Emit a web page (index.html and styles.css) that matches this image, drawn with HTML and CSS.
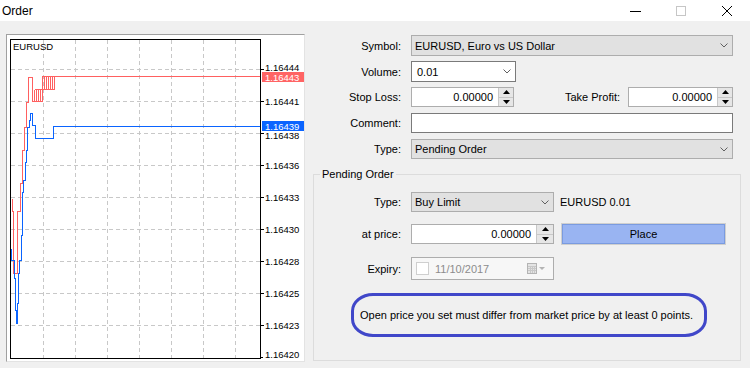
FILE: index.html
```html
<!DOCTYPE html>
<html>
<head>
<meta charset="utf-8">
<link rel="stylesheet" href="styles.css">
</head>
<body>
<div class="titlebar">
  <span class="title">Order</span>
  <div class="winbtns">
    <div class="winbtn"><svg width="12" height="12" viewBox="0 0 12 12"><path d="M1 6.5 H12" stroke="#000" stroke-width="1"/></svg></div>
    <div class="winbtn"><svg width="12" height="12" viewBox="0 0 12 12"><rect x="1.5" y="1.5" width="9" height="9" fill="none" stroke="#c6c6c6"/></svg></div>
    <div class="winbtn"><svg width="12" height="12" viewBox="0 0 12 12"><path d="M1 1 L11 11 M11 1 L1 11" stroke="#000" stroke-width="1"/></svg></div>
  </div>
</div>
<div class="main">
  <div class="chartpanel">
    <svg width="297" height="326" viewBox="7 35 297 326" shape-rendering="crispEdges">
      <rect x="7" y="35" width="297" height="326" fill="#fff"/>
      <g stroke="#c8c8c8" stroke-dasharray="4 3" stroke-width="1">
        <path d="M11 69.5 H260 M11 101.5 H260 M11 133.5 H260 M11 165.5 H260 M11 197.5 H260 M11 229.5 H260 M11 261.5 H260 M11 293.5 H260 M11 325.5 H260"/>
        <path d="M43.5 40 V359 M75.5 40 V359 M107.5 40 V359 M139.5 40 V359 M171.5 40 V359 M203.5 40 V359 M235.5 40 V359"/>
      </g>
      <rect x="10.5" y="39.5" width="250" height="319" fill="none" stroke="#000"/>
      <g stroke="#000">
        <path d="M260 69.5 H264 M260 101.5 H264 M260 133.5 H264 M260 165.5 H264 M260 197.5 H264 M260 229.5 H264 M260 261.5 H264 M260 293.5 H264 M260 325.5 H264 M260 357.5 H263"/>
      </g>
      <g fill="none" stroke="#ff6060">
        <path d="M12.5 198.5 V211.5 H13.5 V273.5 H17.5 V211.5 H20.5 V183.5 H22.5 V150.5 H24.5 V127.5 H26.5 V102.5 H28.5 V77.5 H32.5 V101.5 H42.5 V76.5 H260"/>
        <path d="M34.5 89.5 H42.5 M34.5 89.5 V101.5 M36.5 89.5 V101.5 M38.5 89.5 V101.5 M40.5 89.5 V101.5"/>
        <path d="M42.5 89.5 H54.5 M44.5 76.5 V89.5 M46.5 76.5 V89.5 M48.5 76.5 V89.5 M50.5 76.5 V89.5 M52.5 76.5 V89.5 M54.5 76.5 V89.5"/>
      </g>
      <path fill="none" stroke="#0a64ff" d="M11.5 248.5 V260.5 H14.5 V278.5 H15.5 V310.5 H16.5 V323.5 H17.5 V303.5 H18.5 V273.5 H19.5 V260.5 H21.5 V235.5 H22.5 V192.5 H23.5 V180.5 H25.5 V162.5 H26.5 V150.5 H27.5 V127.5 H29.5 V120.5 H30.5 V113.5 H32.5 V125.5 H35.5 V138.5 H53.5 V126.5 H260"/>
      <g font-family="Liberation Sans, Arial, sans-serif" font-size="9.5" fill="#000" shape-rendering="auto">
        <text x="13" y="50">EURUSD</text>
        <text x="265" y="71">1.16444</text>
        <text x="265" y="105">1.16441</text>
        <text x="265" y="139">1.16438</text>
        <text x="265" y="169">1.16436</text>
        <text x="265" y="201">1.16433</text>
        <text x="265" y="233">1.16430</text>
        <text x="265" y="265">1.16428</text>
        <text x="265" y="297">1.16425</text>
        <text x="265" y="329">1.16423</text>
        <text x="265" y="358">1.16420</text>
      </g>
      <rect x="262" y="72" width="42" height="10" fill="#ff6464"/>
      <rect x="262" y="121" width="42" height="10" fill="#0a64ff"/>
      <g font-family="Liberation Sans, Arial, sans-serif" font-size="9.5" fill="#fff">
        <text x="265" y="80.5">1.16443</text>
        <text x="265" y="129.5">1.16439</text>
      </g>
    </svg>
  </div>
  <div class="form">
    <div class="row r-symbol">
      <span class="lbl">Symbol:</span>
      <div class="combo w-full"><span>EURUSD, Euro vs US Dollar</span><svg class="chev" width="8" height="5" viewBox="0 0 8 5"><path d="M0.5 0.5 L4 4 L7.5 0.5" stroke="#606060" fill="none"/></svg></div>
    </div>
    <div class="row r-volume">
      <span class="lbl">Volume:</span>
      <div class="combo edit w-vol"><span>0.01</span><svg class="chev" width="8" height="5" viewBox="0 0 8 5"><path d="M0.5 0.5 L4 4 L7.5 0.5" stroke="#606060" fill="none"/></svg></div>
    </div>
    <div class="row r-sl">
      <span class="lbl">Stop Loss:</span>
      <div class="spin w-sl">
        <span class="inp">0.00000</span>
        <span class="btns"><span class="b up"><svg width="7" height="4" viewBox="0 0 7 4"><path d="M3.5 0 L7 4 L0 4Z"/></svg></span><span class="b dn"><svg width="7" height="4" viewBox="0 0 7 4"><path d="M0 0 L7 0 L3.5 4Z"/></svg></span></span>
      </div>
      <span class="lbl2">Take Profit:</span>
      <div class="spin w-tp">
        <span class="inp">0.00000</span>
        <span class="btns"><span class="b up"><svg width="7" height="4" viewBox="0 0 7 4"><path d="M3.5 0 L7 4 L0 4Z"/></svg></span><span class="b dn"><svg width="7" height="4" viewBox="0 0 7 4"><path d="M0 0 L7 0 L3.5 4Z"/></svg></span></span>
      </div>
    </div>
    <div class="row r-comment">
      <span class="lbl">Comment:</span>
      <div class="textbox w-full"></div>
    </div>
    <div class="row r-type">
      <span class="lbl">Type:</span>
      <div class="combo w-full"><span>Pending Order</span><svg class="chev" width="8" height="5" viewBox="0 0 8 5"><path d="M0.5 0.5 L4 4 L7.5 0.5" stroke="#606060" fill="none"/></svg></div>
    </div>
    <fieldset class="group">
      <legend>Pending Order</legend>
      <div class="row g-type">
        <span class="lbl glbl">Type:</span>
        <div class="combo w-pend"><span>Buy Limit</span><svg class="chev" width="8" height="5" viewBox="0 0 8 5"><path d="M0.5 0.5 L4 4 L7.5 0.5" stroke="#606060" fill="none"/></svg></div>
        <span class="info">EURUSD 0.01</span>
      </div>
      <div class="row g-price">
        <span class="lbl glbl">at price:</span>
        <div class="spin w-pend">
          <span class="inp">0.00000</span>
          <span class="btns wide"><span class="b up"><svg width="7" height="4" viewBox="0 0 7 4"><path d="M3.5 0 L7 4 L0 4Z"/></svg></span><span class="b dn"><svg width="7" height="4" viewBox="0 0 7 4"><path d="M0 0 L7 0 L3.5 4Z"/></svg></span></span>
        </div>
        <button class="place">Place</button>
      </div>
      <div class="row g-expiry">
        <span class="lbl glbl">Expiry:</span>
        <div class="datebox w-pend">
          <span class="chk"></span>
          <span class="date">11/10/2017</span>
          <svg class="cal" width="18" height="11" viewBox="0 0 18 11"><rect x="0.5" y="0.5" width="9" height="10" fill="#e4e4e4" stroke="#b4b4b4"/><path d="M1 3.5 H9 M1 5.5 H9 M1 7.5 H9 M3.5 3 V10 M5.5 3 V10 M7.5 3 V10" stroke="#c8c8c8"/><path d="M12 4 H18 L15 7Z" fill="#b4b4b4"/></svg>
        </div>
      </div>
      <div class="note">Open price you set must differ from market price by at least 0 points.</div>
    </fieldset>
  </div>
</div>
</body>
</html>
```
FILE: styles.css
```css
* { box-sizing: border-box; }
html, body { margin: 0; }
body {
  width: 750px;
  height: 368px;
  overflow: hidden;
  background: #f0f0f0;
  font-family: "Liberation Sans", Arial, sans-serif;
  font-size: 11px;
  color: #000;
}
.titlebar {
  height: 21px;
  background: #fff;
  display: flex;
  align-items: center;
}
.title { font-size: 12px; padding-left: 2px; }
.winbtns { margin-left: auto; display: flex; height: 21px; }
.winbtn { width: 46px; display: flex; align-items: center; justify-content: center; }
.winbtn svg { display: block; }

.main { display: flex; padding: 13px 0 0 6px; }
.chartpanel {
  width: 299px;
  height: 328px;
  border: 1px solid;
  border-color: #a0a0a0 #e3e3e3 #e3e3e3 #a0a0a0;
  background: #fff;
}
.chartpanel svg { display: block; }

.form { margin-left: 8px; width: 428px; padding-top: 1px; }
.row { display: flex; align-items: center; }
.lbl { width: 88px; text-align: right; margin-right: 10px; flex: none; }
.glbl { width: 87px; }
.r-symbol { height: 21px; }
.r-volume { height: 21px; margin-top: 5px; }
.r-sl { height: 20px; margin-top: 5px; width: 420px; }
.r-comment { height: 20px; margin-top: 6px; }
.r-type { height: 20px; margin-top: 6px; }

.w-full { width: 322px; }
.w-vol { width: 105px; }
.w-sl { width: 103px; }
.w-tp { width: 105px; }
.w-pend { width: 143px; }

.combo {
  height: 100%;
  display: flex;
  align-items: center;
  padding-left: 3px;
  border: 1px solid #adadad;
  background: #e1e1e1;
}
.combo.edit { background: #fff; border-color: #7a7a7a; padding-left: 5px; }
.chev { margin-left: auto; margin-right: 4px; display: block; }

.textbox { height: 100%; background: #fff; border: 1px solid #7a7a7a; }

.spin {
  height: 100%;
  display: flex;
  border: 1px solid #adadad;
  background: #fff;
}
.spin .inp { flex: 1; text-align: right; padding-right: 5px; line-height: 18px; }
.spin .btns {
  width: 15px;
  display: flex;
  flex-direction: column;
  border-left: 1px solid #c8c8c8;
  background: #e6e6e6;
}
.spin .btns.wide { width: 17px; }
.spin .b { flex: 1; display: flex; align-items: center; justify-content: center; }
.spin .b svg { display: block; fill: #000; }
.spin .b.up { border-bottom: 1px solid #c8c8c8; }
.lbl2 { margin-left: auto; margin-right: 8px; }

.group {
  margin: 8px 0 0 0;
  padding: 0 0 23px 0;
  border: 1px solid #dcdcdc;
  min-width: 0;
}
.group legend {
  margin-left: 6px;
  padding: 0 2px;
  line-height: 14px;
}
.g-type { height: 20px; margin-top: 11px; }
.g-price { height: 20px; margin-top: 12px; }
.g-expiry { height: 23px; margin-top: 13px; }
.info { margin-left: 6px; }
.place {
  margin-left: 8px;
  width: 163px;
  height: 20px;
  font: inherit;
  font-size: 11px;
  color: #000;
  background: #99b4f2;
  border: 1px solid #7a9be0;
  box-shadow: 0 0 0 1px #cfcfcf;
  padding: 0;
}
.datebox {
  height: 100%;
  display: flex;
  align-items: center;
  border: 1px solid #adadad;
  background: #f7f7f7;
  padding-left: 4px;
}
.chk { width: 13px; height: 13px; border: 1px solid #cfcfcf; background: #fff; }
.date { color: #8c8c8c; margin-left: 6px; }
.cal { margin-left: auto; margin-right: 8px; display: block; }
.note {
  margin: 13px 0 0 37px;
  width: 356px;
  height: 44px;
  border: 3.5px solid #4047c9;
  border-radius: 22px / 18px;
  padding-left: 6px;
  display: flex;
  align-items: center;
}
```
